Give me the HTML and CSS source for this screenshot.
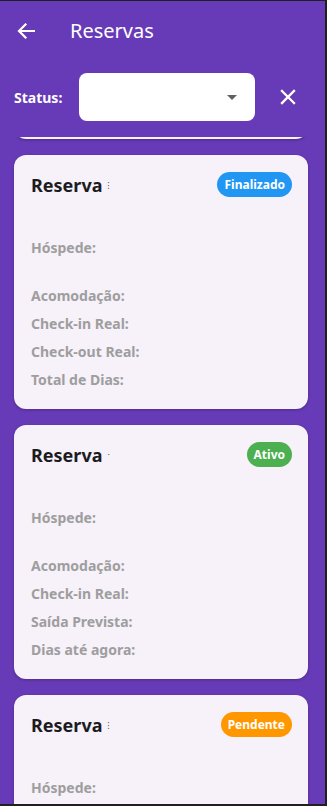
FILE: index.html
```html
<!DOCTYPE html>
<html lang="pt">
<head>
<meta charset="utf-8">
<title>Reservas</title>
<link rel="stylesheet" href="styles.css">
</head>
<body>
<div class="app">
  <header class="appbar">
    <svg class="back" width="18" height="16" viewBox="0 0 18 16" aria-hidden="true">
      <path d="M17 8H2.5M8.5 1.5L2 8l6.5 6.5" fill="none" stroke="#fff" stroke-width="2.2" stroke-linecap="square"/>
    </svg>
    <h1 class="title">Reservas</h1>
  </header>

  <div class="filter">
    <span class="filter-label">Status:</span>
    <div class="select">
      <span class="select-arrow"></span>
    </div>
    <svg class="clear" width="16" height="16" viewBox="0 0 16 16" aria-hidden="true">
      <path d="M2 2L14 14M14 2L2 14" stroke="#fff" stroke-width="2.3" stroke-linecap="square"/>
    </svg>
  </div>

  <div class="list">
    <div class="list-inner">
      <div class="card card-prev"></div>

      <div class="card">
        <div class="card-head">
          <span class="card-title">Reserva <span class="card-id">⁝</span></span>
          <span class="badge badge-blue">Finalizado</span>
        </div>
        <div class="row row-guest">Hóspede:</div>
        <div class="rows">
          <div class="row">Acomodação:</div>
          <div class="row">Check-in Real:</div>
          <div class="row">Check-out Real:</div>
          <div class="row">Total de Dias:</div>
        </div>
      </div>

      <div class="card">
        <div class="card-head">
          <span class="card-title">Reserva <span class="card-id">ˑ</span></span>
          <span class="badge badge-green">Ativo</span>
        </div>
        <div class="row row-guest">Hóspede:</div>
        <div class="rows">
          <div class="row">Acomodação:</div>
          <div class="row">Check-in Real:</div>
          <div class="row">Saída Prevista:</div>
          <div class="row">Dias até agora:</div>
        </div>
      </div>

      <div class="card card-last">
        <div class="card-head">
          <span class="card-title">Reserva <span class="card-id">⁝</span></span>
          <span class="badge badge-orange">Pendente</span>
        </div>
        <div class="row row-guest">Hóspede:</div>
      </div>
    </div>
  </div>
</div>
</body>
</html>
```

FILE: styles.css
```css
* { box-sizing: border-box; }

html, body {
  margin: 0;
  padding: 0;
  background: #202020;
  font-family: "Noto Sans", "Open Sans", sans-serif;
}

body {
  padding-top: 1px;
}

.app {
  width: 325px;
  height: 803px;
  background: #673ab7;
  display: flex;
  flex-direction: column;
  overflow: hidden;
}

.appbar {
  height: 60px;
  flex: none;
  display: flex;
  align-items: center;
  padding-left: 17px;
}

.back {
  display: block;
  margin-right: 35px;
}

.title {
  margin: 0;
  font-size: 20px;
  font-weight: 400;
  color: #fff;
  line-height: 1;
}

.filter {
  flex: none;
  margin-top: 12px;
  height: 48px;
  display: flex;
  align-items: center;
  padding-left: 14px;
}

.filter-label {
  color: #fff;
  font-weight: 700;
  font-size: 14px;
  width: 65px;
}

.select {
  width: 176px;
  height: 48px;
  background: #fff;
  border-radius: 8px;
  display: flex;
  align-items: center;
  justify-content: flex-end;
  padding-right: 18px;
}

.select-arrow {
  width: 0;
  height: 0;
  border-left: 5px solid transparent;
  border-right: 5px solid transparent;
  border-top: 5px solid #616161;
}

.clear {
  display: block;
  margin-left: 25px;
}

.list {
  flex: 1;
  margin-top: 16px;
  overflow: hidden;
  padding: 0 17px 0 14px;
}

.list-inner {
  display: flex;
  flex-direction: column;
  gap: 16px;
}

.card {
  background: #f7f1f9;
  border-radius: 12px;
  box-shadow: 0 1px 3px rgba(0, 0, 0, 0.25);
  padding: 17px 16px 15px 17px;
  flex: none;
}

.card-prev {
  height: 254px;
  margin-top: -252px;
}

.card-last {
  min-height: 254px;
}

.card-head {
  height: 25px;
  display: flex;
  align-items: center;
  justify-content: space-between;
}

.card-title {
  font-size: 18px;
  font-weight: 700;
  color: #1c1b1f;
  line-height: 1;
}

.card-id {
  font-size: 9px;
  font-weight: 400;
  color: #555;
  vertical-align: 3px;
}

.badge {
  height: 25px;
  border-radius: 13px;
  padding: 0 7px;
  color: #fff;
  font-size: 12px;
  font-weight: 700;
  display: flex;
  align-items: center;
}

.badge-blue { background: #2196f3; }
.badge-green { background: #4caf50; }
.badge-orange { background: #ff9800; }

.row {
  height: 28px;
  line-height: 28px;
  font-size: 14px;
  font-weight: 700;
  color: #9e9e9e;
}

.row-guest {
  margin-top: 37px;
}

.rows {
  margin-top: 20px;
}
```
